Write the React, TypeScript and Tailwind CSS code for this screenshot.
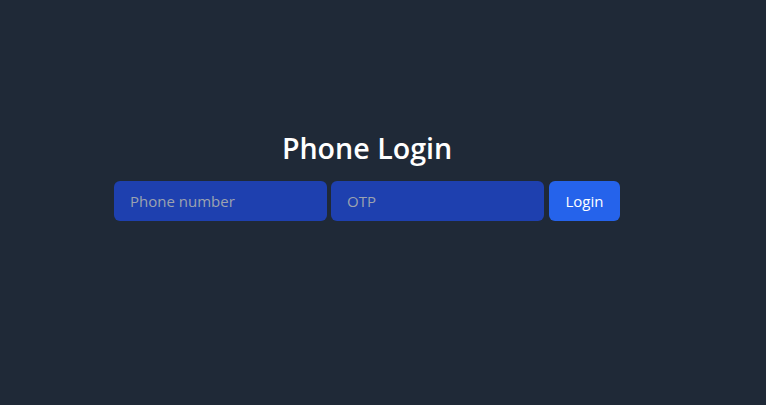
export default function App() {
  return (
    <div className="min-h-screen w-full bg-[#1f2937] flex flex-col items-center pt-[128px] pr-[32px] font-['Open_Sans',sans-serif]">
      <h1 className="text-[28.6px] leading-[40px] font-semibold text-white mb-[13px]">Phone Login</h1>
      <div className="flex flex-row items-center">
        <input
          type="text"
          placeholder="Phone number"
          className="w-[213px] h-[40px] rounded-md bg-[#1e40af] px-4 text-[15px] text-white placeholder:text-[#9ca3af] outline-none"
        />
        <input
          type="text"
          placeholder="OTP"
          className="ml-[4px] w-[213px] h-[40px] rounded-md bg-[#1e40af] px-4 text-[15px] text-white placeholder:text-[#9ca3af] outline-none"
        />
        <button className="ml-[5px] w-[71px] h-[40px] rounded-md bg-[#2563eb] text-white text-[15px]">
          Login
        </button>
      </div>
    </div>
  );
}
